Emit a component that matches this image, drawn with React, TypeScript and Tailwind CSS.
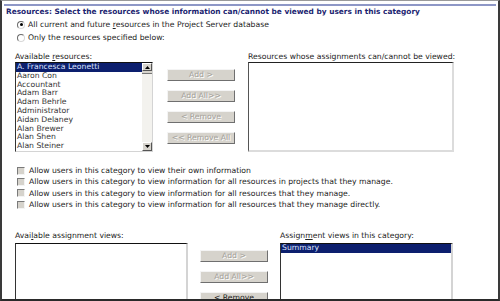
import React from 'react';

const RESOURCES = [
  'A. Francesca Leonetti',
  'Aaron Con',
  'Accountant',
  'Adam Barr',
  'Adam Behrle',
  'Administrator',
  'Aidan Delaney',
  'Alan Brewer',
  'Alan Shen',
  'Alan Steiner',
];

const PERMISSIONS: React.ReactNode[] = [
  <>Allow users in this cate<u>g</u>ory to view their own information</>,
  <>Allow users in this category to view information for all resources in projects that they manage.</>,
  <>Allow users in this category to view information for all resources that they manage.</>,
  <>Allow users in this category to view information for all resources that they manage directly.</>,
];

function Radio({ checked }: { checked?: boolean }) {
  return (
    <span className="flex items-center justify-center w-[8px] h-[8px] rounded-full border border-t-[#6b6b6b] border-l-[#6b6b6b] border-r-[#d8d8d8] border-b-[#d8d8d8] bg-white">
      {checked && <span className="w-[3px] h-[3px] rounded-full bg-black" />}
    </span>
  );
}

function Checkbox() {
  return (
    <span className="w-[8px] h-[8px] border border-t-[#7a7a7a] border-l-[#7a7a7a] border-r-[#f4f4f4] border-b-[#f4f4f4] bg-[#d6d3cc]" />
  );
}

function Btn({ label, enabled }: { label: string; enabled?: boolean }) {
  return (
    <div
      className={
        'h-[12px] w-[68px] flex items-center justify-center bg-[#d6d3cc] border border-t-[#f4f4f4] border-l-[#f4f4f4] border-r-[#6f6f6f] border-b-[#6f6f6f] text-[7.7px] leading-none whitespace-nowrap ' +
        (enabled ? 'text-[#222] border-t-[#333] border-l-[#333]' : 'text-[#a5a29b] [text-shadow:1px_1px_0_#fff]')
      }
    >
      {label}
    </div>
  );
}

export default function App() {
  return (
    <div className="w-[500px] h-[301px] overflow-hidden bg-white border-t border-t-[#9a9a9a] border-x-2 border-x-[#3a3a3a] border-b-2 border-b-[#2a2a2a] font-['DejaVu_Sans',Verdana,sans-serif] text-[#222]">
      <div className="mt-[3px] ml-[2px] mr-[2px] h-[2px] bg-[#8e97c6]" />
      <div className="mt-[1px] pl-[4px] h-[10px] leading-[10px] text-[7.4px] font-bold text-[#1b2470] whitespace-nowrap">
        Resources: Select the resources whose information can/cannot be viewed by users in this category
      </div>

      <div className="mt-[1px] pl-[15px] flex flex-col text-[7.7px]">
        <div className="h-[13px] flex items-center gap-[3px]">
          <Radio checked />
          <span>All current and future <u>r</u>esources in the Project Server database</span>
        </div>
        <div className="h-[13px] flex items-center gap-[3px]">
          <Radio />
          <span>Only the resources specified below:</span>
        </div>
      </div>

      {/* resource lists */}
      <div className="mt-[8px] pl-[13px] flex text-[7.7px]">
        <div className="w-[138px] flex flex-col">
          <div className="h-[10px] leading-[10px]">
            Available <u>r</u>esources:
          </div>
          <div className="h-[90px] flex border border-t-[#111] border-l-[#333] border-r-[#d4d4d4] border-b-[#d4d4d4] bg-white">
            <div className="flex-1 flex flex-col text-[#333] overflow-hidden">
              {RESOURCES.map((r, i) => (
                <div
                  key={r}
                  className={
                    'h-[8.8px] leading-[8.8px] pl-[1px] whitespace-nowrap ' +
                    (i === 0 ? 'bg-[#0c1f6e] text-[#dfe4ff]' : '')
                  }
                >
                  {r}
                </div>
              ))}
            </div>
            <div className="w-[10px] flex flex-col bg-[#f3f2ee]">
              <div className="h-[8px] flex items-center justify-center bg-[#d6d3cc] border border-t-[#fff] border-l-[#fff] border-r-[#555] border-b-[#555]">
                <svg width="5" height="3" viewBox="0 0 5 3"><polygon points="2.5,0 5,3 0,3" fill="#000" /></svg>
              </div>
              <div className="h-[3px] bg-[#d6d3cc] border-b border-b-[#777]" />
              <div className="flex-1" />
              <div className="h-[9px] flex items-center justify-center bg-[#d6d3cc] border border-t-[#fff] border-l-[#fff] border-r-[#555] border-b-[#555]">
                <svg width="5" height="3" viewBox="0 0 5 3"><polygon points="0,0 5,0 2.5,3" fill="#000" /></svg>
              </div>
            </div>
          </div>
        </div>

        <div className="ml-[14px] w-[68px] pt-[17px] flex flex-col gap-[9px]">
          <Btn label="Add >" />
          <Btn label="Add All>>" />
          <Btn label="< Remove" />
          <Btn label="<< Remove All" />
        </div>

        <div className="ml-[13px] w-[206px] flex flex-col">
          <div className="h-[10px] leading-[10px] whitespace-nowrap">
            Resources whose assignments can/cannot be viewed:
          </div>
          <div className="h-[90px] bg-white border-t border-l border-t-[#222] border-l-[#555] border-r-2 border-b-2 border-r-[#dcdcdc] border-b-[#dcdcdc]" />
        </div>
      </div>

      {/* permissions */}
      <div className="mt-[13px] pl-[15px] flex flex-col text-[7.7px]">
        {PERMISSIONS.map((p, i) => (
          <div key={i} className="h-[11.33px] flex items-center gap-[4px] whitespace-nowrap">
            <Checkbox />
            <span>{p}</span>
          </div>
        ))}
      </div>

      {/* assignment views */}
      <div className="mt-[21px] pl-[13px] flex text-[7.7px]">
        <div className="w-[173px] flex flex-col">
          <div className="h-[10px] leading-[10px]">
            Avai<u>l</u>able assignment views:
          </div>
          <div className="mt-[2px] h-[70px] bg-white border-t border-l border-t-[#111] border-l-[#333] border-r-2 border-r-[#d4d4d4]" />
        </div>

        <div className="ml-[12px] w-[68px] pt-[19px] flex flex-col gap-[9px]">
          <Btn label="Add >" />
          <Btn label="Add All>>" />
          <Btn label="< Remove" enabled />
        </div>

        <div className="ml-[12px] w-[173px] flex flex-col">
          <div className="h-[10px] leading-[10px] whitespace-nowrap">
            Assign<u>m</u>ent views in this category:
          </div>
          <div className="mt-[2px] h-[70px] bg-white border-t border-l border-t-[#111] border-l-[#333] border-r-2 border-r-[#d4d4d4]">
            <div className="h-[8.8px] leading-[8.8px] pl-[1px] bg-[#0c1f6e] text-[#dfe4ff]">Summary</div>
          </div>
        </div>
      </div>
    </div>
  );
}
